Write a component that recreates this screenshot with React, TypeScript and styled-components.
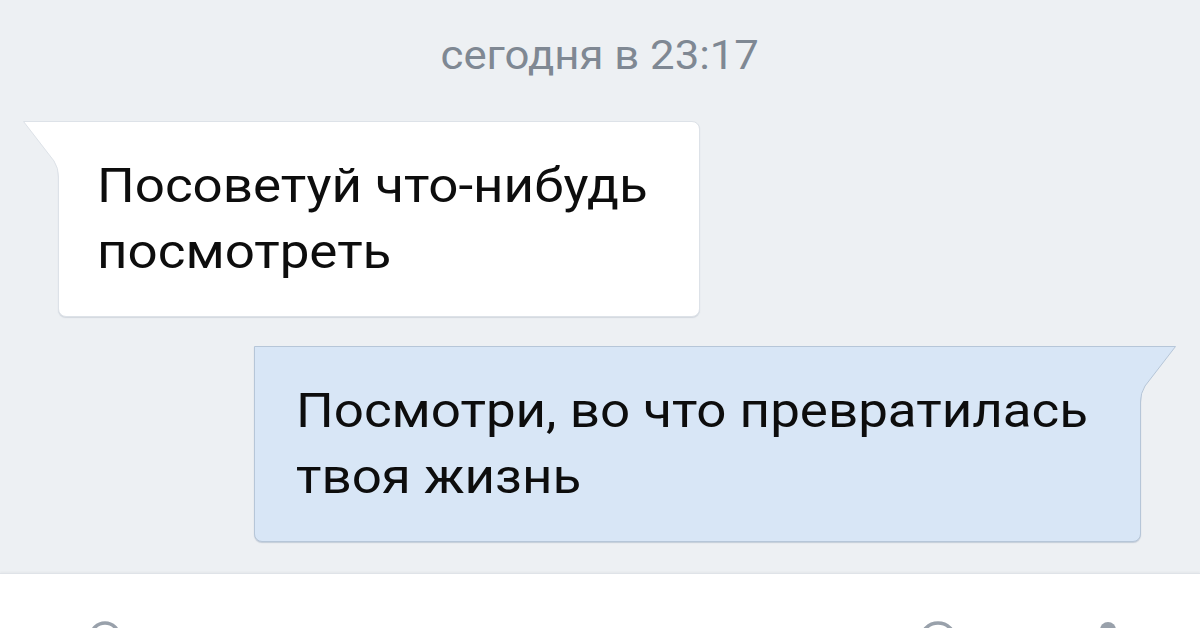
import React from "react";
import styled, { createGlobalStyle } from "styled-components";

const Global = createGlobalStyle`
  html, body { margin: 0; padding: 0; }
  body { font-family: Roboto, "Noto Sans", Arial, sans-serif; background: #edf0f3; }
`;

const Screen = styled.div`
  width: 1200px;
  height: 628px;
  overflow: hidden;
  display: flex;
  flex-direction: column;
  background: #edf0f3;
`;

const Chat = styled.div`
  height: 573px;
  flex: none;
  display: flex;
  flex-direction: column;
  padding-top: 34px;
  box-sizing: border-box;
`;

const DateLabel = styled.div`
  text-align: center;
  font-size: 40px;
  line-height: 44px;
  color: #7f8893;
`;

const Wide = styled.span<{ $center?: boolean; $sx: number }>`
  display: inline-block;
  white-space: nowrap;
  transform: scaleX(${(p) => p.$sx});
  transform-origin: ${(p) => (p.$center ? "center" : "left")} center;
`;

const Line = styled.div`
  white-space: nowrap;
`;

const Row = styled.div<{ $out?: boolean }>`
  display: flex;
  justify-content: ${(p) => (p.$out ? "flex-end" : "flex-start")};
  padding: ${(p) => (p.$out ? "0 59px 0 0" : "0 0 0 58px")};
  margin-top: ${(p) => (p.$out ? "29px" : "43px")};
`;

const Bubble = styled.div<{ $out?: boolean; $w: number }>`
  position: relative;
  box-sizing: border-box;
  width: ${(p) => p.$w}px;
  background: ${(p) => (p.$out ? "#d8e6f6" : "#ffffff")};
  border: 1px solid ${(p) => (p.$out ? "#b6c6d8" : "#dde2e8")};
  border-radius: ${(p) => (p.$out ? "0 0 8px 8px" : "0 8px 8px 8px")};
  box-shadow: 0 1px 1px ${(p) => (p.$out ? "rgba(120,140,165,0.35)" : "rgba(150,160,175,0.3)")};
  padding: 31px 30px 31px ${(p) => (p.$out ? "41px" : "38px")};
  font-size: 49px;
  line-height: 66px;
  color: #0d0d0d;
`;

const Tail = styled.svg<{ $out?: boolean }>`
  position: absolute;
  top: -1px;
  ${(p) => (p.$out ? "right: -36px; transform: scaleX(-1);" : "left: -36px;")}
  width: 38px;
  height: 58px;
  overflow: visible;
`;

const BottomBar = styled.div`
  flex: 1;
  background: #ffffff;
  border-top: 1px solid #dfe3e8;
  box-shadow: 0 -1px 2px rgba(0, 0, 0, 0.04);
  display: flex;
  align-items: flex-start;
  padding: 46px 0 0 88px;
  box-sizing: border-box;
`;

const IconSlot = styled.div<{ $ml?: number }>`
  margin-left: ${(p) => p.$ml ?? 0}px;
  display: flex;
`;

const TailShape: React.FC<{ out?: boolean }> = ({ out }) => {
  const fill = out ? "#d8e6f6" : "#ffffff";
  const stroke = out ? "#b6c6d8" : "#dde2e8";
  return (
    <Tail $out={out} viewBox="0 0 38 58">
      <path d="M0.5 0.5 L31 40 Q35.5 47 35.5 56 L35.5 58 L38 58 L38 0.5 Z" fill={fill} />
      <path d="M38 0.5 L0.5 0.5 L31 40 Q35.5 47 35.5 56 L35.5 58" fill="none" stroke={stroke} strokeWidth="1" />
    </Tail>
  );
};

const SX = (46 * 1.15) / 49;

export default function App() {
  return (
    <>
      <Global />
      <Screen>
        <Chat>
          <DateLabel>
            <Wide $center $sx={(38 * 1.15) / 40}>сегодня в 23:17</Wide>
          </DateLabel>
          <Row>
            <Bubble $w={642}>
              <TailShape />
              <Line><Wide $sx={SX}>Посоветуй что-нибудь</Wide></Line>
              <Line><Wide $sx={SX}>посмотреть</Wide></Line>
            </Bubble>
          </Row>
          <Row $out>
            <Bubble $out $w={887}>
              <TailShape out />
              <Line><Wide $sx={SX}>Посмотри, во что превратилась</Wide></Line>
              <Line><Wide $sx={SX}>твоя жизнь</Wide></Line>
            </Bubble>
          </Row>
        </Chat>
        <BottomBar>
          <IconSlot>
            <svg width="34" height="34" viewBox="0 0 34 34">
              <circle cx="17" cy="17" r="14" fill="none" stroke="#99a1ab" strokeWidth="3.5" />
            </svg>
          </IconSlot>
          <IconSlot $ml={796}>
            <svg width="40" height="40" viewBox="0 0 40 40">
              <circle cx="20" cy="20" r="17" fill="none" stroke="#99a1ab" strokeWidth="3.5" />
            </svg>
          </IconSlot>
          <IconSlot $ml={140}>
            <svg width="20" height="36" viewBox="0 0 20 36">
              <rect x="2" y="2" width="16" height="26" rx="8" fill="#99a1ab" />
            </svg>
          </IconSlot>
        </BottomBar>
      </Screen>
    </>
  );
}
